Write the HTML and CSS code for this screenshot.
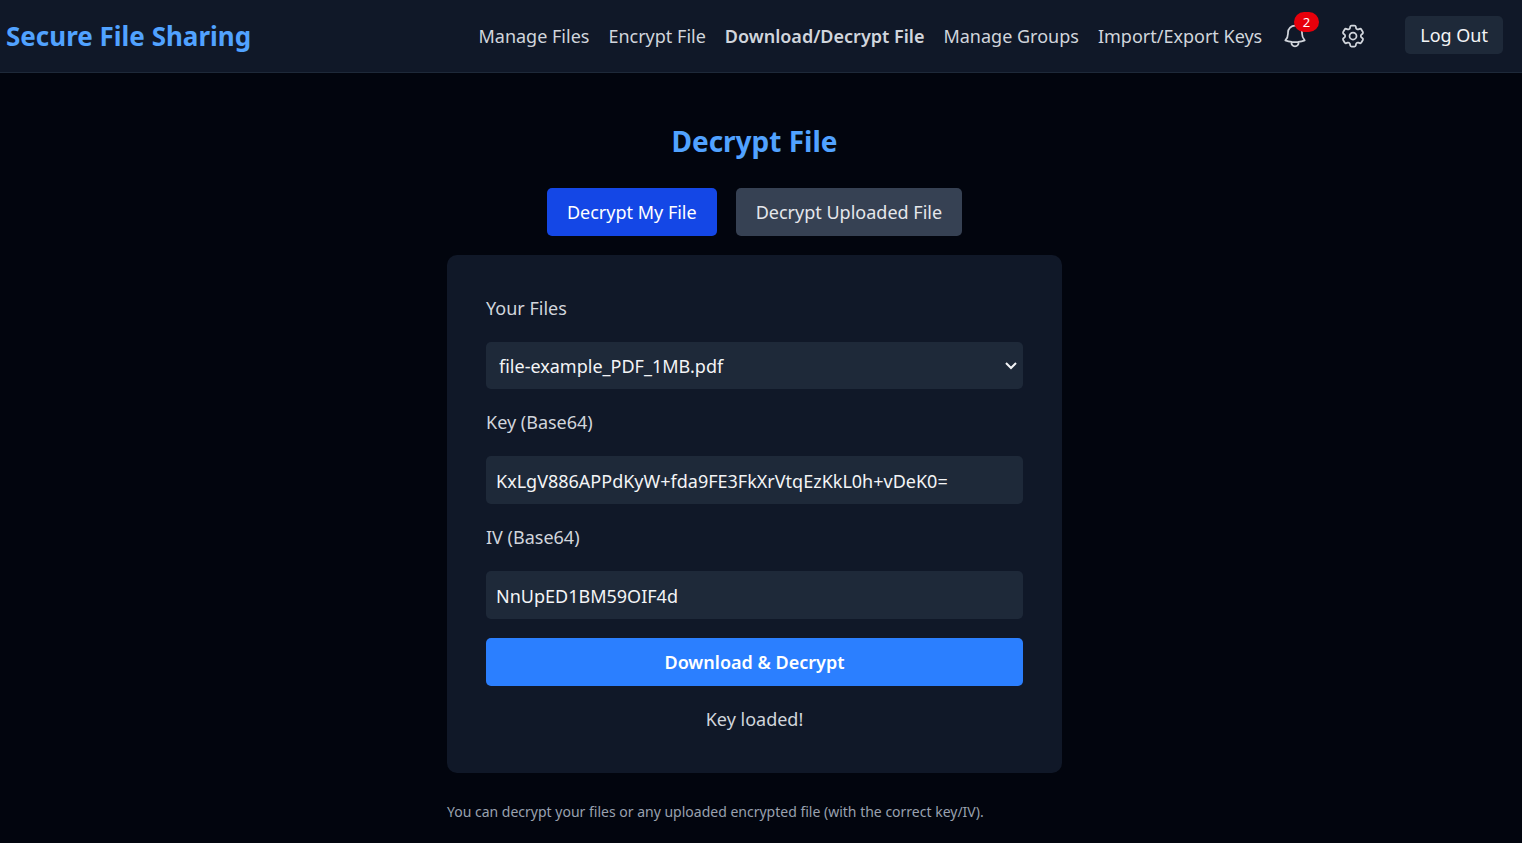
FILE: index.html
```html
<!DOCTYPE html>
<html lang="en">
<head>
<meta charset="utf-8">
<meta name="viewport" content="width=device-width, initial-scale=1">
<title>Secure File Sharing</title>
<link rel="stylesheet" href="styles.css">
</head>
<body>
<header class="header">
  <h1 class="brand">Secure File Sharing</h1>
  <nav class="nav">
    <a class="nav-link" href="#">Manage Files</a>
    <a class="nav-link" href="#">Encrypt File</a>
    <a class="nav-link active" href="#" aria-current="page">Download/Decrypt File</a>
    <a class="nav-link" href="#">Manage Groups</a>
    <a class="nav-link" href="#">Import/Export Keys</a>
    <div class="actions">
      <button class="icon-button" type="button" aria-label="Notifications">
        <svg class="icon" viewBox="0 0 24 24" aria-hidden="true"><path d="M14.857 17.082a23.848 23.848 0 0 0 5.454-1.31A8.967 8.967 0 0 1 18 9.75V9A6 6 0 0 0 6 9v.75a8.967 8.967 0 0 1-2.312 6.022c1.733.64 3.56 1.085 5.455 1.31m5.714 0a24.255 24.255 0 0 1-5.714 0m5.714 0a3 3 0 1 1-5.714 0"/></svg>
        <span class="badge">2</span>
      </button>
      <button class="icon-button" type="button" aria-label="Settings">
        <svg class="icon" viewBox="0 0 24 24" aria-hidden="true"><path d="M9.594 3.94c.09-.542.56-.94 1.11-.94h2.593c.55 0 1.02.398 1.11.94l.213 1.281c.063.374.313.686.645.87.074.04.147.083.22.127.325.196.72.257 1.075.124l1.217-.456a1.125 1.125 0 0 1 1.37.49l1.296 2.247a1.125 1.125 0 0 1-.26 1.431l-1.003.827c-.293.241-.438.613-.43.992a7.723 7.723 0 0 1 0 .255c-.008.378.137.75.43.991l1.004.827c.424.35.534.955.26 1.43l-1.298 2.247a1.125 1.125 0 0 1-1.369.491l-1.217-.456c-.355-.133-.75-.072-1.076.124a6.47 6.47 0 0 1-.22.128c-.331.183-.581.495-.644.869l-.213 1.281c-.09.543-.56.94-1.11.94h-2.594c-.55 0-1.019-.398-1.11-.94l-.213-1.281c-.062-.374-.312-.686-.644-.87a6.52 6.52 0 0 1-.22-.127c-.325-.196-.72-.257-1.076-.124l-1.217.456a1.125 1.125 0 0 1-1.369-.49l-1.297-2.247a1.125 1.125 0 0 1 .26-1.431l1.004-.827c.292-.24.437-.613.43-.991a6.932 6.932 0 0 1 0-.255c.007-.38-.138-.751-.43-.992l-1.004-.827a1.125 1.125 0 0 1-.26-1.43l1.297-2.247a1.125 1.125 0 0 1 1.37-.491l1.216.456c.356.133.751.072 1.076-.124.072-.044.146-.086.22-.128.332-.183.582-.495.644-.869l.214-1.28Z"/><path d="M15 12a3 3 0 1 1-6 0 3 3 0 0 1 6 0Z"/></svg>
      </button>
    </div>
    <button class="logout" type="button">Log Out</button>
  </nav>
</header>
<main class="main">
  <h2 class="title">Decrypt File</h2>
  <div class="tabs">
    <button class="tab selected" type="button">Decrypt My File</button>
    <button class="tab" type="button">Decrypt Uploaded File</button>
  </div>
  <form class="card">
    <label class="label" for="file">Your Files</label>
    <div class="select-wrap">
      <select class="field select" id="file"><option>file-example_PDF_1MB.pdf</option></select>
      <svg class="chevron" viewBox="0 0 14 10" aria-hidden="true"><path d="M2 2l5 5 5-5"/></svg>
    </div>
    <label class="label" for="key">Key (Base64)</label>
    <input class="field" id="key" type="text" value="KxLgV886APPdKyW+fda9FE3FkXrVtqEzKkL0h+vDeK0=">
    <label class="label" for="iv">IV (Base64)</label>
    <input class="field" id="iv" type="text" value="NnUpED1BM59OIF4d">
    <button class="submit" type="button">Download &amp; Decrypt</button>
    <p class="status">Key loaded!</p>
  </form>
  <p class="note">You can decrypt your files or any uploaded encrypted file (with the correct key/IV).</p>
</main>
</body>
</html>
```
FILE: styles.css
```css
* {
  box-sizing: border-box;
}

body {
  margin: 0;
  background: #02050e;
  color: #d1d5dc;
  font: 18px/29px "Segoe UI", "Noto Sans", sans-serif;
}

h1, h2, p {
  margin: 0;
}

button, input, select {
  border: 0;
  font: inherit;
}

button {
  cursor: pointer;
}

.header {
  display: flex;
  align-items: center;
  justify-content: space-between;
  min-height: 73px;
  padding: 16px 19px 18px 6px;
  background: #101828;
  border-bottom: 1px solid #1e2939;
}

.brand {
  padding-top: 2px;
  color: #51a2ff;
  font-size: 26px;
  line-height: 36px;
}

.nav {
  display: flex;
  align-items: center;
  gap: 19px;
}

.nav-link {
  padding-top: 2px;
  color: inherit;
  text-decoration: none;
  white-space: nowrap;
}

.active {
  font-weight: 600;
}

.actions {
  display: flex;
  gap: 30px;
  margin-right: 19px;
}

.icon-button {
  position: relative;
  display: flex;
  padding: 1px 0 0;
  background: none;
  color: inherit;
}

.icon {
  width: 28px;
  height: 28px;
  fill: none;
  stroke: currentColor;
  stroke-width: 1.5;
  stroke-linecap: round;
  stroke-linejoin: round;
}

.badge {
  position: absolute;
  top: -9px;
  right: -10px;
  padding: 0 9px;
  border-radius: 10px;
  background: #e7000b;
  color: #fff;
  font-size: 13px;
  line-height: 20px;
}

.logout {
  padding: 5px 15px 4px;
  border-radius: 5px;
  background: #1e2939;
  color: #f3f4f6;
}

.main {
  display: flex;
  flex-direction: column;
  align-items: center;
  padding: 48px 13px 19px 0;
}

.title {
  color: #51a2ff;
  font-size: 28px;
  line-height: 40px;
}

.tabs {
  display: flex;
  gap: 19px;
  margin: 27px 0 19px;
}

.tab {
  padding: 10px 20px 9px;
  border-radius: 5px;
  background: #364153;
  color: #e5e7eb;
}

.selected {
  background: #1447e6;
  color: #fff;
}

.card {
  display: flex;
  flex-direction: column;
  gap: 19px;
  width: 100%;
  max-width: 615px;
  padding: 39px;
  border-radius: 10px;
  background: #101828;
}

.field {
  width: 100%;
  height: 48px;
  padding: 1px 10px 0;
  border-radius: 5px;
  background: #1e2939;
  color: #f3f4f6;
}

.select-wrap {
  position: relative;
  display: flex;
}

.select {
  height: 47px;
  padding: 1px 13px 0;
  appearance: none;
}

.chevron {
  position: absolute;
  top: 19px;
  right: 5px;
  width: 14px;
  height: 10px;
  fill: none;
  stroke: #f3f4f6;
  stroke-width: 2;
  pointer-events: none;
}

.submit {
  padding: 10px 20px 9px;
  border-radius: 5px;
  background: #2b7fff;
  color: #fff;
  font-weight: 600;
}

.status {
  text-align: center;
}

.note {
  width: 100%;
  max-width: 615px;
  margin-top: 29px;
  color: #99a1af;
  font-size: 14px;
  line-height: 20px;
}
```
